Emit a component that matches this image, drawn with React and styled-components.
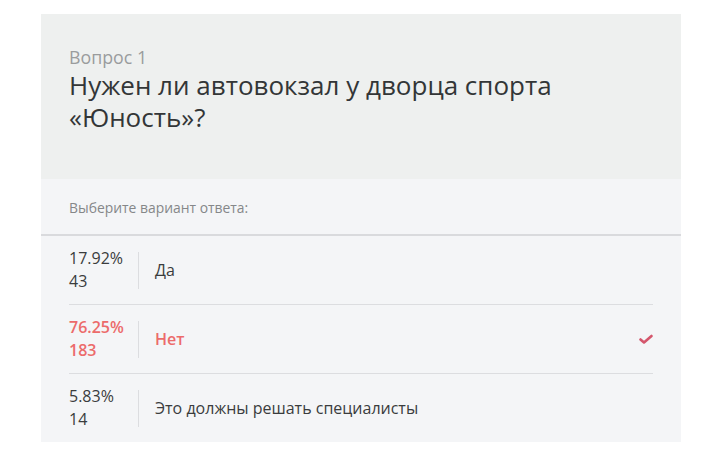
import React from "react";
import styled, { createGlobalStyle } from "styled-components";

const Global = createGlobalStyle`
  html, body { margin: 0; padding: 0; background: #fff; }
  body { font-family: "Open Sans", "Noto Sans", sans-serif; }
`;

const Page = styled.div`
  padding: 14px 0 0 41px;
`;

const Card = styled.div`
  width: 640px;
  background: #f4f5f7;
`;

const Header = styled.div`
  background: #eef0ef;
  height: 165px;
  box-sizing: border-box;
  padding: 31px 28px 0;
`;

const Label = styled.div`
  font-size: 17.8px;
  line-height: 24px;
  color: #9a9c9d;
`;

const Title = styled.h1`
  margin: 0;
  font-weight: 400;
  font-size: 26px;
  line-height: 32px;
  color: #333637;
  max-width: 520px;
`;

const Hint = styled.div`
  height: 57px;
  display: flex;
  align-items: center;
  padding: 1px 28px 0;
  box-sizing: border-box;
  font-size: 13.9px;
  color: #858789;
  border-bottom: 2px solid #d9dadd;
`;

const List = styled.div`
  padding: 0 28px;
`;

const Row = styled.div`
  display: flex;
  align-items: center;
  height: ${(p) => (p.$first ? "68px" : "69px")};
  box-sizing: border-box;
  border-top: ${(p) => (p.$first ? "none" : "1px solid #dcdde0")};
  color: ${(p) => (p.$selected ? "#ec6b6b" : "#3a3c3d")};
  font-weight: ${(p) => (p.$selected ? 600 : 400)};
`;

const Stats = styled.div`
  width: 69px;
  flex: none;
  font-size: 16px;
  line-height: 23px;
`;

const Divider = styled.div`
  flex: none;
  width: 1px;
  height: 37px;
  background: #dcdde0;
`;

const Answer = styled.div`
  flex: 1;
  padding-left: 16px;
  font-size: 16px;
`;

const Check = styled.svg`
  flex: none;
  width: 14px;
  height: 11px;
`;

const data = [
  { pct: "17.92%", n: "43", text: "Да" },
  { pct: "76.25%", n: "183", text: "Нет", selected: true },
  { pct: "5.83%", n: "14", text: "Это должны решать специалисты" },
];

export default function App() {
  return (
    <>
      <Global />
      <Page>
        <Card>
          <Header>
            <Label>Вопрос 1</Label>
            <Title>Нужен ли автовокзал у дворца спорта «Юность»?</Title>
          </Header>
          <Hint>Выберите вариант ответа:</Hint>
          <List>
            {data.map((d, i) => (
              <Row key={i} $first={i === 0} $selected={d.selected}>
                <Stats>
                  <div>{d.pct}</div>
                  <div>{d.n}</div>
                </Stats>
                <Divider />
                <Answer>{d.text}</Answer>
                {d.selected && (
                  <Check viewBox="0 0 14 11">
                    <path d="M1.5 5.5 L5 8.5 L12.5 2" fill="none" stroke="#d4566c" strokeWidth="2.6" strokeLinecap="round" strokeLinejoin="round" />
                  </Check>
                )}
              </Row>
            ))}
          </List>
        </Card>
      </Page>
    </>
  );
}
